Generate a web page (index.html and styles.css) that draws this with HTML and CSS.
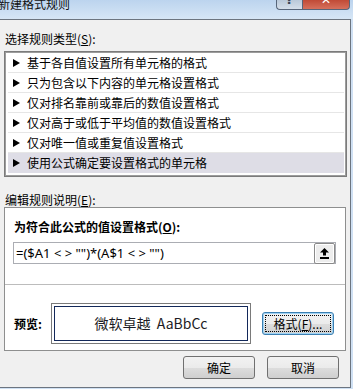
FILE: index.html
```html
<!DOCTYPE html>
<html>
<head>
<meta charset="utf-8">
<title>新建格式规则</title>
<link rel="stylesheet" href="styles.css">
</head>
<body>
<div class="window">
	<div class="titlebar">
		<span class="title">新建格式规则</span>
		<div class="caption-btns">
			<span class="cap help"><span>?</span></span>
			<span class="cap close"><span>&#x2715;</span></span>
		</div>
	</div>
	<div class="client">
		<div class="label first">选择规则类型(<u>S</u>):</div>
		<ul class="rules">
			<li><i class="arrow"></i>基于各自值设置所有单元格的格式</li>
			<li><i class="arrow"></i>只为包含以下内容的单元格设置格式</li>
			<li><i class="arrow"></i>仅对排名靠前或靠后的数值设置格式</li>
			<li><i class="arrow"></i>仅对高于或低于平均值的数值设置格式</li>
			<li><i class="arrow"></i>仅对唯一值或重复值设置格式</li>
			<li class="selected"><i class="arrow"></i>使用公式确定要设置格式的单元格</li>
		</ul>
		<div class="label second">编辑规则说明(<u>E</u>):</div>
		<div class="panel">
			<div class="panel-top">
				<div class="bold">为符合此公式的值设置格式(<u>O</u>):</div>
				<div class="formula">
					<span class="formula-text">=($A1 &lt; &gt; "")*(A$1 &lt; &gt; "")</span>
					<span class="pick">
						<svg width="9" height="11" viewBox="0 0 9 11"><polygon points="4.5,0 9,4.5 6,4.5 6,7.5 3,7.5 3,4.5 0,4.5" fill="#000"/><rect x="0" y="9" width="9" height="2" fill="#000"/></svg>
					</span>
				</div>
			</div>
			<div class="preview-row">
				<span class="bold preview-label">预览:</span>
				<div class="preview"><div class="preview-inner">微软卓越&nbsp;&nbsp;AaBbCc</div></div>
				<button class="btn format"><span class="focus-rect">格式(<u>F</u>)...</span></button>
			</div>
		</div>
		<div class="actions">
			<button class="btn">确定</button>
			<button class="btn">取消</button>
		</div>
	</div>
</div>
</body>
</html>
```
FILE: styles.css
```css
* {box-sizing:border-box;}
body {
	margin:0;
	padding:0;
	background:#cfe0f3;
	font-family:"Noto Sans CJK SC", "Noto Sans", sans-serif;
	font-size:12px;
	color:#000;}
u {text-decoration:underline;}
.window {
	width:353px;
	height:389px;
	overflow:hidden;
	background:#cfe0f3;}
.titlebar {
	height:19px;
	display:flex;
	align-items:flex-start;
	padding-right:3px;
	overflow:hidden;
	background:linear-gradient(#bcd4ee, #d6e6f6);}
.title {
	margin:-3px 0 0 -2px;
	line-height:14px;
	color:#111;}
.caption-btns {
	margin-left:auto;
	display:flex;}
.cap {
	display:block;
	height:10px;
	overflow:hidden;
	text-align:center;
	border:1px solid #56657a;
	border-top:none;}
.cap span {
	display:block;
	margin-top:-8px;
	line-height:16px;}
.help {
	width:26px;
	border-right:none;
	border-radius:0 0 0 4px;
	background:linear-gradient(#b9c8d9, #d5dfea);
	color:#3b4757;
	font:bold 13px "DejaVu Sans", sans-serif;}
.close {
	width:48px;
	border-radius:0 0 4px 0;
	background:linear-gradient(#c04a36, #d6705c);
	color:#fff;
	font:bold 12px "DejaVu Sans", sans-serif;}
.client {
	height:369px;
	margin-right:2px;
	border:1px solid #6c7580;
	border-left:none;
	background:#f0f0f0;
	padding-left:4px;
	display:flex;
	flex-direction:column;
	align-items:flex-start;}
.label {
	height:14px;
	line-height:14px;
	padding-left:1px;}
.label.first {margin:12px 0 5px;}
.label.second {margin:16px 0 0;}
.rules {
	list-style:none;
	margin:0;
	width:343px;
	height:126px;
	padding:1px 2px 1px 3px;
	border:1px solid #7b7b7b;
	box-shadow:inset 0 0 0 1px #9c9c9c;
	background:#fff;}
.rules li {
	height:20px;
	line-height:19px;
	padding-left:5px;
	border-bottom:1px solid #e6e6e6;
	display:flex;
	align-items:center;}
.rules li.selected {
	background:#dedde6;
	border-bottom:none;
	line-height:20px;}
.arrow {
	width:0;
	height:0;
	margin-right:7px;
	border-left:7px solid #000;
	border-top:4px solid transparent;
	border-bottom:4px solid transparent;}
.panel {
	width:342px;
	height:144px;
	border:1px solid #8e8f8f;
	background:#fff;}
.panel-top {
	height:77px;
	padding:12px 0 0 9px;
	border-bottom:1px solid #bcbcbc;}
.bold {
	font-weight:bold;
	height:14px;
	line-height:14px;}
.formula {
	margin:8px 0 0 -1px;
	width:323px;
	height:22px;
	border:1px solid #abadb3;
	display:flex;
	align-items:flex-start;}
.formula-text {
	padding-left:2px;
	line-height:20px;
	font-family:"Noto Sans", "Noto Sans CJK SC", sans-serif;
	font-size:13px;}
.pick {
	margin-left:auto;
	width:21px;
	height:21px;
	border:1px solid #8a8a8a;
	border-radius:2px;
	box-shadow:inset 0 0 0 1px #fff;
	background:#ededed;
	display:flex;
	align-items:center;
	justify-content:center;}
.preview-row {
	display:flex;
	align-items:center;
	padding:18px 0 0 9px;}
.preview-label {width:37px;}
.preview {
	width:200px;
	height:41px;
	border:1px solid #7a7a7a;
	padding:2px;}
.preview-inner {
	height:100%;
	border:1px solid #13285a;
	text-align:center;
	font-size:14px;
	line-height:33px;
	color:#1c1c24;}
.btn {
	width:72px;
	height:23px;
	padding:0;
	border:1px solid #707070;
	border-radius:3px;
	background:linear-gradient(#f2f2f2 0, #ebebeb 50%, #dddddd 51%, #cfcfcf 100%);
	font-family:"Noto Sans CJK SC", sans-serif;
	font-size:12px;
	color:#000;}
.btn.format {
	margin-left:11px;
	border-color:#3c7fb1;
	box-shadow:inset 0 0 0 1px #9fd3f5;
	padding:2px;}
.focus-rect {
	display:block;
	height:100%;
	line-height:15px;
	border:1px dotted #000;}
.actions {
	margin-top:5px;
	align-self:stretch;
	display:flex;
	justify-content:flex-end;
	gap:12px;
	padding-right:11px;}
```
